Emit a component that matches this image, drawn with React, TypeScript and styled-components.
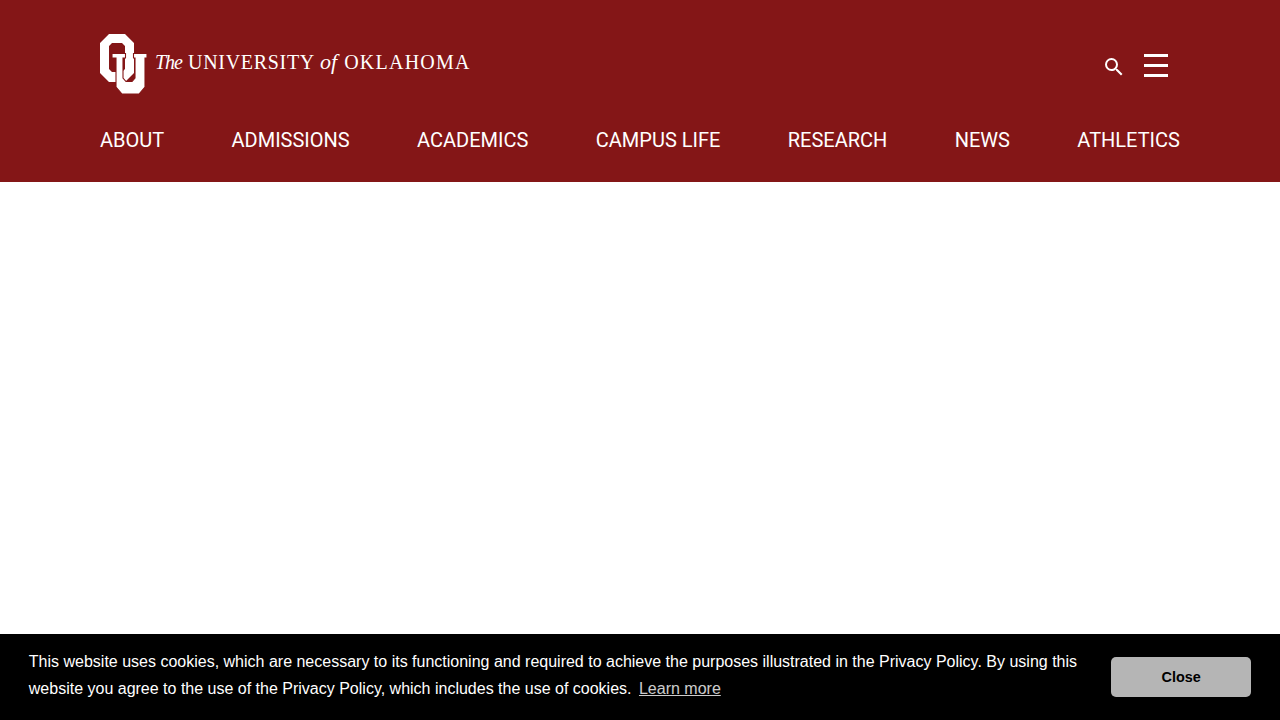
import styled, { createGlobalStyle } from 'styled-components';

const navItems = ['ABOUT', 'ADMISSIONS', 'ACADEMICS', 'CAMPUS LIFE', 'RESEARCH', 'NEWS', 'ATHLETICS'];

const App = (): JSX.Element => {
  return (
    <>
      <GlobalStyle />
      <Header>
        <TopRow>
          <Brand href='#'>
            <OuLogo />
            <Wordmark>
              <WordItalic $size={20} $tracking={-1} $gap={6}>The</WordItalic>
              <WordCaps $tracking={0.7} $gap={5}>UNIVERSITY</WordCaps>
              <WordItalic $size={22} $tracking={0} $gap={7}>of</WordItalic>
              <WordCaps $tracking={1.25} $gap={0}>OKLAHOMA</WordCaps>
            </Wordmark>
          </Brand>
          <Tools>
            <SearchButton aria-label='Search'>
              <svg width='24' height='24' viewBox='0 0 24 24' fill='currentColor'>
                <path d='M15.5 14h-.79l-.28-.27A6.47 6.47 0 0 0 16 9.5 6.5 6.5 0 1 0 9.5 16c1.61 0 3.09-.59 4.23-1.57l.27.28v.79l5 4.99L20.49 19l-4.99-5zm-6 0C7.01 14 5 11.99 5 9.5S7.01 5 9.5 5 14 7.01 14 9.5 11.99 14 9.5 14z' />
              </svg>
            </SearchButton>
            <MenuButton aria-label='Menu'>
              <MenuBar />
              <MenuBar />
              <MenuBar />
            </MenuButton>
          </Tools>
        </TopRow>
        <Nav>
          {navItems.map((item) => (
            <NavLink key={item} href='#'>{item}</NavLink>
          ))}
        </Nav>
      </Header>

      <CookieBar>
        <CookieMessage>
          This website uses cookies, which are necessary to its functioning and required to achieve the purposes illustrated in the Privacy Policy. By using this website you agree to the use of the Privacy Policy, which includes the use of cookies.{' '}
          <LearnMore href='#'>Learn more</LearnMore>
        </CookieMessage>
        <CloseButton>Close</CloseButton>
      </CookieBar>
    </>
  );
};

const OuLogo = (): JSX.Element => (
  <svg width='47' height='60' viewBox='0 0 47 60'>
    <path
      fillRule='evenodd'
      fill='#fff'
      d='M9 0H25L34 9V39L25 48H9L0 39V9ZM12 9L9 12V35L12 38H22L25 35V12L22 9Z'
    />
    <path
      fill='#fff'
      stroke='#841617'
      strokeWidth='1.1'
      d='M12 19.5H25.5V24H23V44L26 47.5H32L35 44V24H33.5V19.5H47V24H45V53L39 60H22L16 53V24H12Z'
    />
  </svg>
);

const GlobalStyle = createGlobalStyle`
  html, body {
    margin: 0;
    padding: 0;
    background: #fff;
  }

  body {
    height: 720px;
    overflow: hidden;
    font-family: Roboto, sans-serif;
  }
`;

const Header = styled.header`
  display: flex;
  flex-direction: column;
  height: 182px;
  box-sizing: border-box;
  padding: 34px 100px 0;
  background-color: #841617;
  color: #fff;
`;

const TopRow = styled.div`
  display: flex;
  justify-content: space-between;
  align-items: flex-start;
  height: 60px;
`;

const Brand = styled.a`
  display: flex;
  align-items: flex-start;
  gap: 8px;
  color: #fff;
  text-decoration: none;
`;

const Wordmark = styled.span`
  display: flex;
  align-items: baseline;
  margin-top: 16px;
  font-family: 'Liberation Serif', serif;
  font-size: 20px;
  line-height: 24px;
`;

const WordItalic = styled.span<{ $size: number; $tracking: number; $gap: number }>`
  margin-right: ${({ $gap }) => $gap}px;
  font-style: italic;
  font-size: ${({ $size }) => $size}px;
  letter-spacing: ${({ $tracking }) => $tracking}px;
`;

const WordCaps = styled.span<{ $tracking: number; $gap: number }>`
  margin-right: ${({ $gap }) => $gap}px;
  letter-spacing: ${({ $tracking }) => $tracking}px;
`;

const Tools = styled.div`
  display: flex;
  align-items: center;
  gap: 18px;
  margin-top: 17px;
  margin-right: 12px;
`;

const SearchButton = styled.button`
  display: flex;
  width: 24px;
  height: 24px;
  margin-top: 4px;
  padding: 0;
  border: 0;
  background: none;
  color: #fff;
`;

const MenuButton = styled.button`
  display: flex;
  flex-direction: column;
  gap: 7px;
  width: 24px;
  padding: 0;
  border: 0;
  background: none;
`;

const MenuBar = styled.span`
  display: block;
  height: 3px;
  background-color: #fff;
`;

const Nav = styled.nav`
  display: flex;
  justify-content: space-between;
  margin-top: 33px;
`;

const NavLink = styled.a`
  color: #fff;
  font-size: 20px;
  line-height: 26px;
  text-decoration: none;
`;

const CookieBar = styled.div`
  position: fixed;
  left: 0;
  right: 0;
  bottom: 0;
  display: flex;
  align-items: center;
  box-sizing: border-box;
  height: 86px;
  padding: 0 28.8px;
  background-color: #000;
  color: #fff;
  font-family: 'Liberation Sans', Arial, sans-serif;
  font-size: 16px;
  line-height: 27px;
  will-change: opacity;
`;

const CookieMessage = styled.span`
  flex: 1;
  margin-right: 16px;
  margin-bottom: 4px;
`;

const LearnMore = styled.a`
  margin-left: 3px;
  color: #fff;
  opacity: 0.8;
  text-decoration: underline;
`;

const CloseButton = styled.button`
  flex: none;
  width: 140px;
  height: 40px;
  padding: 0;
  border: 0;
  border-radius: 5px;
  background-color: #b5b5b5;
  color: #000;
  font-family: 'Liberation Sans', Arial, sans-serif;
  font-size: 14.4px;
  font-weight: 700;
`;

export default App;
